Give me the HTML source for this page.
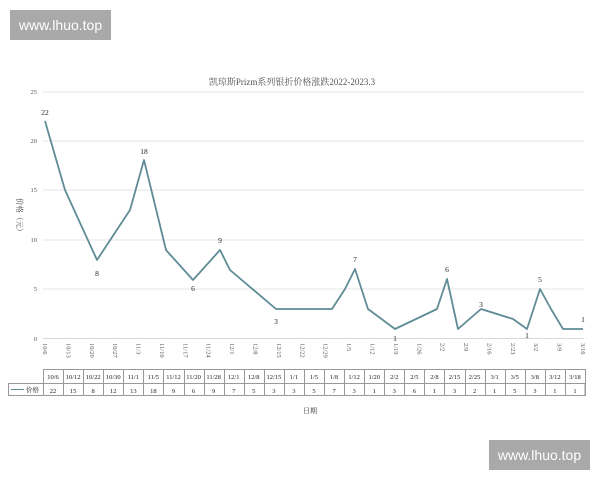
<!DOCTYPE html>
<html><head><meta charset="utf-8"><style>
html,body{margin:0;padding:0;background:#fff;}
body{width:600px;height:480px;position:relative;overflow:hidden;font-family:"Liberation Sans","Noto Sans CJK SC",sans-serif;}
.wm{position:absolute;background:#a9a9a9;color:#fff;font-size:14px;line-height:30px;text-align:center;width:101px;height:30px;}
svg{position:absolute;left:0;top:0;}
</style></head><body>
<svg width="600" height="480" font-family="Liberation Serif, Noto Serif CJK SC, serif" font-size="7" fill="#333">
<text x="292" y="85" text-anchor="middle" font-size="9" fill="#555">凯琼斯Prizm系列银折价格涨跌2022-2023.3</text>
<g stroke="#e6e6e6" stroke-width="1">
<line x1="43" y1="92" x2="584" y2="92"/><line x1="43" y1="141" x2="584" y2="141"/><line x1="43" y1="190" x2="584" y2="190"/><line x1="43" y1="240" x2="584" y2="240"/><line x1="43" y1="289" x2="584" y2="289"/><line x1="43" y1="338.5" x2="584" y2="338.5" stroke="#d8d8d8"/>
</g>
<g text-anchor="end" font-size="6.5" fill="#555">
<text x="37" y="94">25</text><text x="37" y="143">20</text><text x="37" y="192">15</text><text x="37" y="242">10</text><text x="37" y="291">5</text><text x="37" y="341">0</text>
</g>
<text transform="translate(17,198) rotate(90)" font-size="7.5" fill="#444">价格（元）</text>
<polyline fill="none" stroke="#5f8c95" stroke-width="1.8" stroke-linejoin="round" points="45,121 65,190 97,260 130,210 144,160 166,250 193,280 220,250 230,270 276,309 332,309 345,289 355,269 368,309 395,329 437,309 447,279 458,329 481,309 513,319 527,329 540,289 551,309 563,329 583,329"/>
<g text-anchor="middle" font-size="7.5" fill="#222">
<text x="45" y="115">22</text><text x="144" y="154">18</text><text x="97" y="276">8</text><text x="193" y="291">6</text><text x="220" y="243">9</text><text x="276" y="324">3</text><text x="355" y="262">7</text><text x="395" y="341">1</text><text x="447" y="272">6</text><text x="481" y="307">3</text><text x="527" y="338">1</text><text x="540" y="282">5</text><text x="583" y="322">1</text>
</g>
<g font-size="6.5" fill="#555" id="xl"></g>
<text x="310" y="413" text-anchor="middle" font-size="7" fill="#333">日期</text>
<g id="tbl" font-size="6.5" fill="#222"></g>
</svg>
<div class="wm" style="left:10px;top:10px;">www.lhuo.top</div>
<div class="wm" style="left:489px;top:440px;">www.lhuo.top</div>
<script>
var ns="http://www.w3.org/2000/svg";
var xl=document.getElementById("xl");
var d=["10/6","10/13","10/20","10/27","11/3","11/10","11/17","11/24","12/1","12/8","12/15","12/22","12/29","1/5","1/12","1/19","1/26","2/2","2/9","2/16","2/23","3/2","3/9","3/16"];
for(var i=0;i<d.length;i++){var x=45+i*(538/23);var t=document.createElementNS(ns,"text");t.setAttribute("transform","translate("+(x-2)+",343) rotate(90)");t.textContent=d[i];xl.appendChild(t);}
var tb=document.getElementById("tbl");
var h=["10/6","10/12","10/22","10/30","11/1","11/5","11/12","11/20","11/28","12/1","12/8","12/15","1/1","1/5","1/8","1/12","1/20","2/2","2/5","2/8","2/15","2/25","3/1","3/5","3/8","3/12","3/18"];
var v=[22,15,8,12,13,18,9,6,9,7,5,3,3,5,7,3,1,3,6,1,3,2,1,5,3,1,1];
function el(n,a){var e=document.createElementNS(ns,n);for(var k in a)e.setAttribute(k,a[k]);tb.appendChild(e);return e;}
var x0=43,x1=585,n=h.length,w=(x1-x0)/n;
el("rect",{x:8.5,y:383.5,width:x1-8.5,height:12,fill:"none",stroke:"#999","stroke-width":1});
el("rect",{x:x0+.5,y:369.5,width:x1-x0,height:26,fill:"none",stroke:"#999","stroke-width":1});
el("line",{x1:x0,y1:383.5,x2:x1,y2:383.5,stroke:"#999"});
for(var i=1;i<n;i++){var xx=Math.round(x0+i*w)+.5;el("line",{x1:xx,y1:369,x2:xx,y2:396,stroke:"#999"});}
for(var i=0;i<n;i++){var cx=x0+(i+.5)*w;var t=el("text",{x:cx,y:379,"text-anchor":"middle"});t.textContent=h[i];var t2=el("text",{x:cx,y:393,"text-anchor":"middle"});t2.textContent=v[i];}
el("line",{x1:11,y1:389.5,x2:24,y2:389.5,stroke:"#5f8c95","stroke-width":1});
var t=el("text",{x:26,y:392});t.textContent="价格";
</script>
</body></html>
